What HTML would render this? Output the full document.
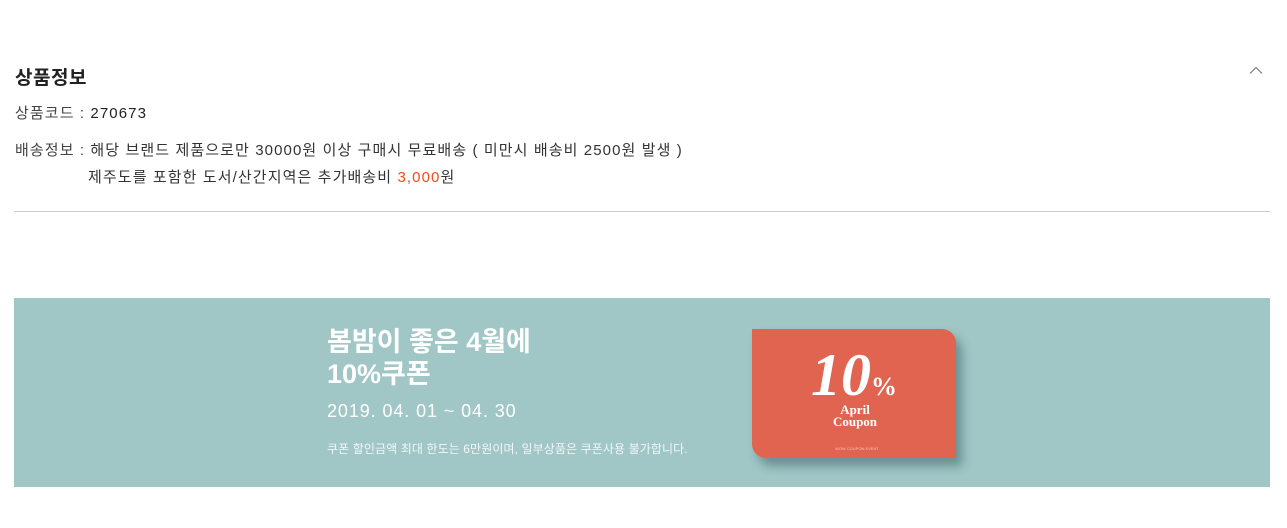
<!DOCTYPE html>
<html><head><meta charset="utf-8"><style>
body{margin:0;width:1287px;height:528px;background:#fff;font-family:"Liberation Sans","Noto Sans CJK KR",sans-serif;position:relative;overflow:hidden;color:#333}
.a{position:absolute;white-space:nowrap}
.t{font-size:15px;letter-spacing:1.1px}
</style></head><body>
<div class="a" style="left:15px;top:63px;font-size:19px;font-weight:bold;color:#222;letter-spacing:0.5px">상품정보</div>
<svg class="a" style="left:1249px;top:66px" width="14" height="9"><path d="M1 7.5L7 1.5L13 7.5" fill="none" stroke="#888" stroke-width="1.3"/></svg>
<div class="a t" style="left:15px;top:102px;color:#444">상품코드 : <span style="color:#222">270673</span></div>
<div class="a t" style="left:15px;top:139px;color:#444">배송정보 : <span style="color:#333">해당 브랜드 제품으로만 30000원 이상 구매시 무료배송 ( 미만시 배송비 2500원 발생 )</span></div>
<div class="a t" style="left:88px;top:166px;color:#333">제주도를 포함한 도서/산간지역은 추가배송비 <span style="color:#f04a1a">3,000</span>원</div>
<div class="a" style="left:14px;top:211px;width:1256px;height:1px;background:#ccc"></div>
<div class="a" style="left:14px;top:298px;width:1256px;height:189px;background:#a0c6c6"></div>
<div class="a" style="left:327px;top:326px;font-size:27px;font-weight:bold;color:#fff;line-height:32px">봄밤이 좋은 4월에<br>10%쿠폰</div>
<div class="a" style="left:327px;top:401px;font-size:18px;color:#fff;letter-spacing:0.9px">2019. 04. 01 ~ 04. 30</div>
<div class="a" style="left:327px;top:440px;font-size:12px;color:#f2f7f7;letter-spacing:0.1px">쿠폰 할인금액 최대 한도는 6만원이며, 일부상품은 쿠폰사용 불가합니다.</div>
<div class="a" style="left:752px;top:329px;width:204px;height:129px;background:#e06450;border-radius:0 14px 0 14px;box-shadow:6px 8px 10px rgba(40,80,80,0.45)"></div>
<div class="a" style="left:811px;top:342px;font-family:'Liberation Serif',serif;font-style:italic;font-weight:bold;font-size:60px;color:#fff;line-height:66px">10<span style="font-style:normal;font-size:26px">%</span></div>
<div class="a" style="left:822px;top:404px;width:66px;text-align:center;font-family:'Liberation Serif',serif;font-weight:bold;font-size:13px;color:#fff;line-height:12px">April<br>Coupon</div>
<div class="a" style="left:835px;top:446px;font-size:4px;color:#f4c8bf">WOW COUPON EVENT</div>
</body></html>
